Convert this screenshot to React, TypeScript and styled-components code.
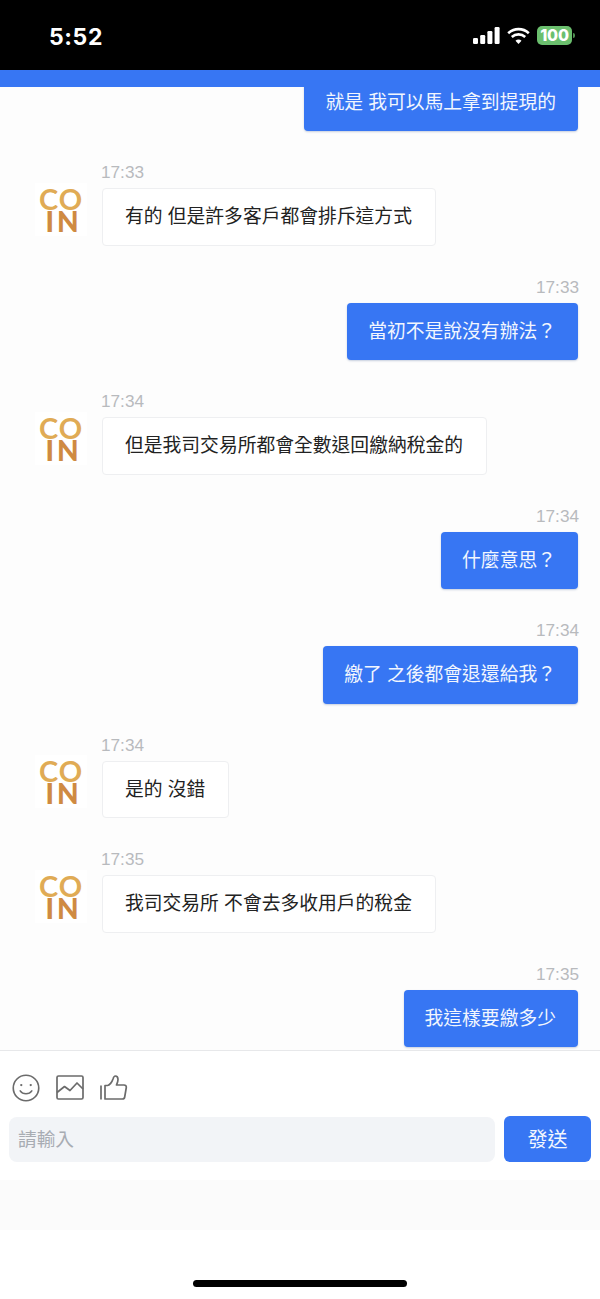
import React from "react";
import styled, { createGlobalStyle } from "styled-components";

const GlobalStyle = createGlobalStyle`
  html, body {
    margin: 0;
    padding: 0;
    background: #fff;
  }
  * {
    box-sizing: border-box;
  }
`;

const Page = styled.div`
  width: 600px;
  height: 1299px;
  display: flex;
  flex-direction: column;
  overflow: hidden;
  font-family: "Liberation Sans", "Noto Sans CJK TC", sans-serif;
`;

const StatusBar = styled.header`
  height: 70px;
  flex: none;
  background: #000;
  color: #fff;
  display: flex;
  align-items: center;
  justify-content: space-between;
  padding: 0 28px 0 49px;
`;

const Clock = styled.span`
  font-family: Inter, "Liberation Sans", sans-serif;
  font-size: 23px;
  font-weight: 700;
  letter-spacing: 0.6px;
  padding-top: 4px;
`;

const StatusIcons = styled.div`
  display: flex;
  align-items: center;
  gap: 7px;
`;

const Battery = styled.div`
  width: 35px;
  height: 19px;
  border-radius: 5px;
  background: #6bbf6e;
  color: #fff;
  font-family: Inter, "Liberation Sans", sans-serif;
  font-size: 16px;
  font-weight: 800;
  letter-spacing: -0.2px;
  line-height: 19px;
  text-align: center;
  position: relative;
  &::after {
    content: "";
    position: absolute;
    right: -3px;
    top: 7px;
    width: 2px;
    height: 5px;
    border-radius: 0 2px 2px 0;
    background: #4f8f52;
  }
`;

const BlueBar = styled.div`
  height: 17px;
  flex: none;
  background: #3776f3;
  position: relative;
  z-index: 1;
`;

const ChatArea = styled.main`
  height: 963px;
  flex: none;
  background: #fdfdfd;
  overflow: hidden;
  display: flex;
  flex-direction: column;
  justify-content: flex-end;
  gap: 31px;
  padding: 0 22px 3px 35px;
`;

const Row = styled.div<{ $mine?: boolean }>`
  flex: none;
  display: flex;
  justify-content: ${(p) => (p.$mine ? "flex-end" : "flex-start")};
  gap: 15px;
`;

const Avatar = styled.div`
  width: 52px;
  height: 53px;
  flex: none;
  align-self: flex-end;
  margin-bottom: 10px;
  background: #fff;
  display: flex;
  flex-direction: column;
  align-items: center;
  padding-top: 4px;
  font-family: Lato, "Liberation Sans", sans-serif;
  font-weight: 700;
  line-height: 24px;
`;

const LogoTop = styled.span`
  height: 22px;
  color: #e0ab55;
  font-size: 29px;
  letter-spacing: 1px;
`;

const LogoBottom = styled.span`
  height: 24px;
  color: #cf8a42;
  font-size: 28px;
  font-weight: 900;
  letter-spacing: 3px;
  padding-left: 5px;
`;

const Column = styled.div<{ $mine?: boolean }>`
  display: flex;
  flex-direction: column;
  align-items: ${(p) => (p.$mine ? "flex-end" : "flex-start")};
  gap: 6px;
`;

const Time = styled.time<{ $mine?: boolean }>`
  font-size: 17.2px;
  line-height: 20px;
  color: #b8babd;
  margin-left: ${(p) => (p.$mine ? "0" : "-1px")};
  margin-right: ${(p) => (p.$mine ? "-1px" : "0")};
`;

const Bubble = styled.div<{ $mine?: boolean }>`
  height: 57.5px;
  display: flex;
  align-items: center;
  font-size: 18.8px;
  white-space: pre;
  border-radius: 4px;
  padding-bottom: 4px;
  ${(p) =>
    p.$mine
      ? `
    padding-left: 21px;
    padding-right: 22px;
    background: #3776f3;
    color: #f2f6fe;
    box-shadow: 0 1px 2px rgba(40, 70, 130, 0.25);
  `
      : `
    padding-left: 22px;
    padding-right: 23px;
    background: #fff;
    color: #222;
    border: 1px solid #eeeff1;
  `}
`;

const Composer = styled.footer`
  flex: none;
  background: #fff;
  border-top: 1px solid #e7e8ea;
  padding: 22px 9px 18px;
  display: flex;
  flex-direction: column;
  gap: 14px;
`;

const Tools = styled.div`
  height: 29px;
  display: flex;
  align-items: center;
  gap: 16px;
  padding-left: 3px;
  color: #6b6b6b;
`;

const InputRow = styled.div`
  display: flex;
  gap: 9px;
  height: 46px;
`;

const FakeInput = styled.div`
  flex: 1;
  margin-top: 1px;
  background: #f2f4f7;
  border-radius: 8px;
  color: #a8acb3;
  font-size: 18.7px;
  display: flex;
  align-items: center;
  padding: 0 0 4px 9px;
`;

const SendButton = styled.button`
  width: 87px;
  border: 0;
  border-radius: 6px;
  background: #3776f3;
  color: #f2f6fe;
  font-family: inherit;
  font-size: 20px;
  padding: 0 0 2px;
`;

const Band = styled.div`
  height: 50px;
  flex: none;
  background: #fbfbfb;
`;

const HomeArea = styled.div`
  flex: 1;
  background: #fff;
  display: flex;
  justify-content: center;
  padding-top: 50px;
`;

const HomeIndicator = styled.div`
  width: 214px;
  height: 7px;
  border-radius: 4px;
  background: #000;
`;

type Message = {
  time: string;
  text: string;
  mine?: boolean;
};

const messages: Message[] = [
  { time: "17:33", text: "就是 我可以馬上拿到提現的", mine: true },
  { time: "17:33", text: "有的 但是許多客戶都會排斥這方式" },
  { time: "17:33", text: "當初不是說沒有辦法？", mine: true },
  { time: "17:34", text: "但是我司交易所都會全數退回繳納稅金的" },
  { time: "17:34", text: "什麼意思？", mine: true },
  { time: "17:34", text: "繳了 之後都會退還給我？", mine: true },
  { time: "17:34", text: "是的 沒錯" },
  { time: "17:35", text: "我司交易所 不會去多收用戶的稅金" },
  { time: "17:35", text: "我這樣要繳多少", mine: true },
];

const CoinLogo = () => (
  <Avatar>
    <LogoTop>CO</LogoTop>
    <LogoBottom>IN</LogoBottom>
  </Avatar>
);

const SignalIcon = () => (
  <svg width="27" height="17" viewBox="0 0 27 17" fill="#fff">
    <rect x="0" y="11" width="5" height="6" rx="1.2" />
    <rect x="7.2" y="8" width="5" height="9" rx="1.2" />
    <rect x="14.4" y="4" width="5" height="13" rx="1.2" />
    <rect x="21.6" y="0" width="5" height="17" rx="1.2" />
  </svg>
);

const WifiIcon = () => (
  <svg width="23" height="17" viewBox="0 0 23 17" fill="none" stroke="#fff" strokeWidth="2.6">
    <path d="M1.2 6.2a15 15 0 0 1 20.6 0" />
    <path d="M4.8 10a10 10 0 0 1 13.4 0" />
    <path d="M11.5 17l-3-3.2a4.200 4.200 0 0 1 6 0z" fill="#fff" stroke="none" />
  </svg>
);

const SmileIcon = () => (
  <svg width="28" height="28" viewBox="0 0 29 29" fill="none" stroke="currentColor" strokeWidth="1.7">
    <circle cx="14.5" cy="14.5" r="13.2" />
    <circle cx="9.6" cy="11.5" r="1.2" fill="currentColor" stroke="none" />
    <circle cx="19.4" cy="11.5" r="1.2" fill="currentColor" stroke="none" />
    <path d="M8.5 17.5c2.8 4 9.2 4 12 0" strokeLinecap="round" />
  </svg>
);

const PictureIcon = () => (
  <svg width="28" height="25" viewBox="0 0 28 25" fill="none" stroke="currentColor" strokeWidth="1.7">
    <rect x="1" y="1" width="26" height="23" rx="1.5" />
    <path d="M1 17.5l7.5-6 5.500 4 7-7.500 6 6" strokeLinejoin="round" />
  </svg>
);

const ThumbIcon = () => (
  <svg width="28" height="26" viewBox="0 0 28 26" fill="none" stroke="currentColor" strokeWidth="1.7">
    <path d="M1 10.5v14" />
    <path
      d="M5 10.5h2.500c2 0 4.500-3.500 5.500-6.500.5-1.700 1-3 2.300-3 1.800 0 2.700 1.500 2.700 3.500 0 2-.7 3.500-1.500 5.500h7.500c1.500 0 2.500 1 2.300 2.500l-1.600 9.500c-.2 1.200-1 2-2.300 2H5z"
      strokeLinejoin="round"
    />
  </svg>
);

const App: React.FC = () => {
  return (
    <Page>
      <GlobalStyle />
      <StatusBar>
        <Clock>5:52</Clock>
        <StatusIcons>
          <SignalIcon />
          <WifiIcon />
          <Battery>100</Battery>
        </StatusIcons>
      </StatusBar>
      <BlueBar />
      <ChatArea>
        {messages.map((m, i) => (
          <Row key={i} $mine={m.mine}>
            {!m.mine && <CoinLogo />}
            <Column $mine={m.mine}>
              <Time $mine={m.mine}>{m.time}</Time>
              <Bubble $mine={m.mine}>{m.text}</Bubble>
            </Column>
          </Row>
        ))}
      </ChatArea>
      <Composer>
        <Tools>
          <SmileIcon />
          <PictureIcon />
          <ThumbIcon />
        </Tools>
        <InputRow>
          <FakeInput>請輸入</FakeInput>
          <SendButton>發送</SendButton>
        </InputRow>
      </Composer>
      <Band />
      <HomeArea>
        <HomeIndicator />
      </HomeArea>
    </Page>
  );
};

export default App;
